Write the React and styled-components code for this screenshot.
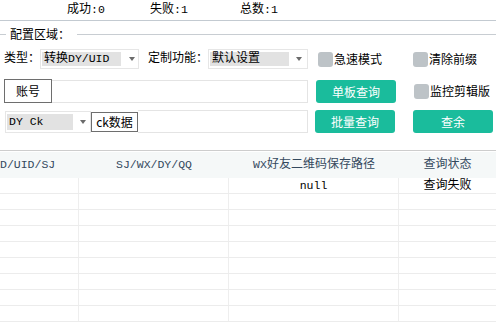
import styled, { createGlobalStyle } from "styled-components";

const SONG = `"Liberation Mono", "Noto Sans CJK SC", monospace`;
const HEI = `"Noto Sans CJK SC", "Noto Sans", sans-serif`;

const GlobalStyle = createGlobalStyle`
  body {
    margin: 0;
    background: #fff;
    font-family: ${HEI};
    font-size: 12px;
    color: #000;
  }
  * { box-sizing: border-box; }
`;

const Page = styled.div`
  width: 496px;
  height: 322px;
  overflow: hidden;
  display: flex;
  flex-direction: column;
`;

const Latin = styled.span`
  font-family: "Liberation Mono", monospace;
  font-size: ${(p) => p.$size || 11.5}px;
`;

const StatusBar = styled.div`
  height: 21px;
  border-bottom: 1px solid #c3cad1;
  display: flex;
  align-items: center;
  font-family: ${SONG};
  line-height: 14px;
`;

const StatusItem = styled.div`
  width: ${(p) => p.$w}px;
  margin-left: ${(p) => p.$left || 0}px;
`;

const Legend = styled.div`
  height: 26px;
  margin-bottom: 2px;
  display: flex;
  align-items: center;
  font-family: ${SONG};
  &::before,
  &::after {
    content: "";
    height: 1px;
    background: #c8cdd2;
  }
  &::before {
    width: 6px;
    margin-right: 4px;
  }
  &::after {
    flex: 1;
    margin-left: 7px;
  }
`;

const Row = styled.div`
  display: flex;
  align-items: ${(p) => p.$align || "center"};
  height: ${(p) => p.$h}px;
  margin-top: ${(p) => p.$top || 0}px;
  padding-left: 4px;
`;

const Label = styled.div`
  width: ${(p) => p.$w}px;
  margin-left: ${(p) => p.$left || 0}px;
  font-family: ${SONG};
  line-height: 16px;
`;

const SelectBox = styled.div`
  width: ${(p) => p.$w}px;
  height: ${(p) => p.$h}px;
  margin-left: ${(p) => p.$left || 0}px;
  border: 1px solid #e6e6e6;
  background: #fff;
  display: flex;
  align-items: center;
  padding: 2px 1px;
`;

const SelectValue = styled.div`
  width: ${(p) => p.$w}px;
  height: 100%;
  background: #e2e2e2;
  display: flex;
  align-items: center;
  padding-left: 2px;
  font-family: ${SONG};
  line-height: 14px;
  white-space: nowrap;
`;

const SelectArrow = styled.div`
  margin-left: ${(p) => p.$gap}px;
  width: 0;
  height: 0;
  border-left: 3.5px solid transparent;
  border-right: 3.5px solid transparent;
  border-top: 4px solid #6b6b6b;
`;

const Check = styled.div`
  display: flex;
  align-items: center;
  align-self: center;
  margin-left: ${(p) => p.$left || 0}px;
  line-height: 16px;
  white-space: nowrap;
  &::before {
    content: "";
    width: 15px;
    height: 15px;
    border-radius: 3px;
    background: #bdc3c7;
    margin-right: 1px;
  }
`;

const FieldLabel = styled.div`
  width: ${(p) => p.$w}px;
  height: ${(p) => p.$h}px;
  margin-left: ${(p) => p.$left || 0}px;
  border: 1px solid #6e6e6e;
  background: #fff;
  display: flex;
  align-items: center;
  justify-content: center;
  line-height: 16px;
`;

const Input = styled.div`
  width: ${(p) => p.$w}px;
  height: 23px;
  border: 1px solid #e4e4e4;
  border-left: none;
  background: #fff;
`;

const Button = styled.button`
  width: 80px;
  height: 23px;
  margin-left: ${(p) => p.$left || 0}px;
  border: none;
  border-radius: 3px;
  background: #1abc9c;
  color: #fff;
  font-family: ${HEI};
  font-size: 12px;
  line-height: 16px;
  padding: 0;
`;

const Table = styled.div`
  margin-top: 17px;
  border-top: 1px solid #cdcdcd;
  padding-top: 1px;
  font-family: ${SONG};
`;

const Grid = styled.div`
  display: grid;
  grid-template-columns: 79px 150px 170px 97px;
`;

const HeadRow = styled(Grid)`
  height: 26px;
  background: #f5f8f8;
  color: #34495e;
`;

const HeadCell = styled.div`
  display: flex;
  align-items: center;
  justify-content: ${(p) => (p.$left ? "flex-start" : "center")};
  white-space: nowrap;
  line-height: 16px;
`;

const BodyRow = styled(Grid)`
  height: 16px;
  border-bottom: 1px solid #ececec;
`;

const Cell = styled.div`
  border-right: 1px solid #eeeeee;
  display: flex;
  align-items: center;
  justify-content: center;
  line-height: 14px;
  white-space: nowrap;
  &:last-child {
    border-right: none;
  }
`;

const rows = [
  ["", "", "null", "查询失败"],
  ...Array.from({ length: 8 }, () => ["", "", "", ""]),
];

export default function App() {
  return (
    <>
      <GlobalStyle />
      <Page>
        <StatusBar>
          <StatusItem $left={67} $w={83}>
            成功<Latin>:0</Latin>
          </StatusItem>
          <StatusItem $w={90}>
            失败<Latin>:1</Latin>
          </StatusItem>
          <StatusItem $w={90}>
            总数<Latin>:1</Latin>
          </StatusItem>
        </StatusBar>

        <Legend>配置区域：</Legend>

        <Row $h={20}>
          <Label $w={36}>类型：</Label>
          <SelectBox $w={99} $h={20}>
            <SelectValue $w={79}>
              转换<Latin>DY/UID</Latin>
            </SelectValue>
            <SelectArrow $gap={8} />
          </SelectBox>
          <Label $w={60} $left={9}>
            定制功能：
          </Label>
          <SelectBox $w={100} $h={20}>
            <SelectValue $w={79}>默认设置</SelectValue>
            <SelectArrow $gap={7} />
          </SelectBox>
          <Check $left={10}>急速模式</Check>
          <Check $left={31}>清除前缀</Check>
        </Row>

        <Row $h={24} $top={10} $align="flex-end">
          <FieldLabel $w={48} $h={24}>
            账号
          </FieldLabel>
          <Input $w={256} />
          <Button $left={8}>单板查询</Button>
          <Check $left={18}>监控剪辑版</Check>
        </Row>

        <Row $h={23} $top={7}>
          <SelectBox $w={86} $h={22} $left={1}>
            <SelectValue $w={66}>
              <Latin>DY Ck</Latin>
            </SelectValue>
            <SelectArrow $gap={7} />
          </SelectBox>
          <FieldLabel $w={47} $h={20}>
            ck数据
          </FieldLabel>
          <Input $w={170} />
          <Button $left={7}>批量查询</Button>
          <Button $left={18}>查余</Button>
        </Row>

        <Table>
          <HeadRow>
            <HeadCell $left>
              <Latin>D/UID/SJ</Latin>
            </HeadCell>
            <HeadCell>
              <Latin>SJ/WX/DY/QQ</Latin>
            </HeadCell>
            <HeadCell>
              <Latin>WX</Latin>好友二维码保存路径
            </HeadCell>
            <HeadCell>查询状态</HeadCell>
          </HeadRow>
          {rows.map((r, i) => (
            <BodyRow key={i}>
              {r.map((c, j) => (
                <Cell key={j}>{c === "null" ? <Latin>{c}</Latin> : c}</Cell>
              ))}
            </BodyRow>
          ))}
        </Table>
      </Page>
    </>
  );
}
